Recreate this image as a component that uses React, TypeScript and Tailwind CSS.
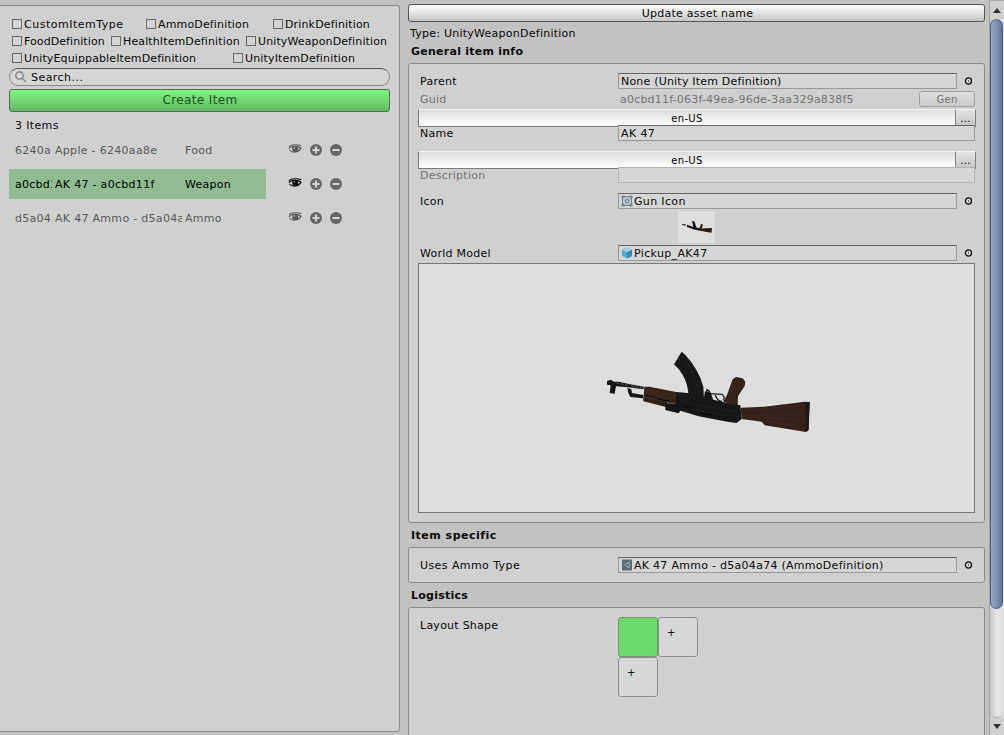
import type { ReactNode } from 'react';

function Check({ label, className }: { label: string; className: string }) {
  return (
    <label className={`flex h-[17px] shrink-0 items-center whitespace-nowrap ${className}`}>
      <span className="mr-[2px] h-[10px] w-[10px] shrink-0 border border-[#686868] bg-[#d4d4d4]" />
      <span className="pt-[2px]">{label}</span>
    </label>
  );
}

function Eye() {
  return (
    <svg viewBox="0 0 14 10" className="h-[10px] w-[14px]">
      <path d="M.8 2.600C4 .4 9.500 .2 13.200 1.800" fill="none" stroke="currentColor" strokeWidth="1.100" />
      <path d="M.8 4.600C3.200 1.800 9.800 1.400 13 4.200C10.800 8.600 4.200 9.400 1.500 6" fill="none" stroke="currentColor" strokeWidth="1.200" />
      <circle cx="7.200" cy="4.900" r="3" fill="currentColor" />
      <circle cx="6.400" cy="3.900" r=".7" fill="#ddd" />
    </svg>
  );
}

function RoundIcon({ plus }: { plus?: boolean }) {
  return (
    <svg viewBox="0 0 12 12" className="h-3 w-3">
      <circle cx="6" cy="6" r="6" fill="#686868" />
      <path d={plus ? 'M2.500 6H9.500M6 2.500V9.500' : 'M2.500 6H9.500'} stroke="#d6d6d6" strokeWidth="2" />
    </svg>
  );
}

function ItemRow({ id, name, type, selected }: { id: string; name: string; type: string; selected?: boolean }) {
  return (
    <div className={`flex h-[30px] items-center ${selected ? 'text-black' : 'text-[#585858]'}`}>
      <div className={`flex h-[30px] w-[257px] items-center pl-[6px] pt-[2px] ${selected ? 'bg-[#92bb93]' : ''}`}>
        <span className="w-[37px] overflow-hidden whitespace-nowrap">{id}</span>
        <span className="ml-[3px] w-[127px] overflow-hidden whitespace-nowrap tracking-[0.3px]">{name}</span>
        <span className="ml-[3px]">{type}</span>
      </div>
      <span className="mb-[3px] ml-[22px]"><Eye /></span>
      <span className="ml-[8px]"><RoundIcon plus /></span>
      <span className="ml-[8px]"><RoundIcon /></span>
    </div>
  );
}

function Rifle() {
  return (
    <svg viewBox="0 0 720 330" className="h-[110px] w-[240px]">
      <path d="M51 138L62 134L72 140L86 140L120 148L162 155L160 163L115 157L78 154L74 176L59 174L62 151L51 149Z" fill="#151617" />
      <path d="M80 144L115 151M124 153L155 158" stroke="#aaa" strokeWidth="1.500" strokeDasharray="8 5" />
      <path d="M112 158L124 163L126 174L160 180L159 190L121 186L115 174Z" fill="#151617" />
      <path d="M163 155L178 155L262 172L260 207L228 202L161 182Z" fill="#35241a" />
      <path d="M160 184L232 201L228 216L160 199Z" fill="#302015" />
      <path d="M162 181L240 200" stroke="#171310" strokeWidth="5" />
      <path d="M170 164L254 180M168 173L252 192" stroke="#3f2b1e" strokeWidth="2" />
      <path d="M275 50L286 60Q326 103 340 155L342 192L296 186Q294 126 252 88Z" fill="#161819" />
      <path d="M273 60Q313 105 327 178" stroke="#202223" strokeWidth="3" fill="none" />
      <path d="M258 171L293 174L342 187L345 169L361 171L370 194L402 202L451 211L455 252L440 264L412 260L326 244L271 227L266 235L226 225L226 204L258 206Z" fill="#151617" />
      <path d="M272 196L308 208L440 230M303 222L412 243" stroke="#1f2122" strokeWidth="3" fill="none" />
      <path d="M281 214L301 219M331 234L366 240" stroke="#090a0b" strokeWidth="4" />
      <path d="M350 174L351 164L360 170M358 176L396 178Q407 187 399 196M376 180Q382 199 396 199" fill="none" stroke="#1a1b1c" strokeWidth="4" />
      <path d="M400 200L411 180L428 133L438 126L458 130L466 140L464 153L444 184L443 214Z" fill="#33221a" />
      <path d="M436 137L419 190" stroke="#412a1c" strokeWidth="3" />
      <path d="M452 218L522 215L645 200L659 201L655 286L648 291L524 271L515 260L455 252Z" fill="#33211a" />
      <path d="M462 226L642 211M464 242L642 238M529 249L638 255M542 261L638 274" stroke="#3e281e" strokeWidth="3" />
      <path d="M647 201L659 201L656 285L648 290Z" fill="#1d1815" />
    </svg>
  );
}

function RifleIcon() {
  return (
    <svg viewBox="0 0 30 14" className="h-[14px] w-[30px]">
      <path d="M0 4.500L4 5.200" stroke="#222" strokeWidth="1.200" />
      <path d="M5 4.800L10 6.500L19 8.500L19 11L12 9.500L5 7Z" fill="#1b1511" />
      <path d="M10 1L12.500 1.500L14.500 8L11.500 7.500Z" fill="#111" />
      <path d="M19 4L21 4.500L19.500 9L17.500 8.500Z" fill="#1f1610" />
      <path d="M18.500 8.500L30 8L29.500 12.800L22 11.500L18.500 10.800Z" fill="#2c1a11" />
    </svg>
  );
}

function Cube() {
  return (
    <svg viewBox="0 0 12 12" className="h-3 w-3 shrink-0">
      <path d="M6 .5L11 2.800V9L6 11.500L1 9V2.800Z" fill="#58a9d3" />
      <path d="M6 .5L11 2.800L6 5.200L1 2.800Z" fill="#9bd3e9" />
      <path d="M6 5.200L11 2.800V9L6 11.500Z" fill="#3e88b3" />
    </svg>
  );
}

function SpriteIcon() {
  return (
    <svg viewBox="0 0 12 12" className="h-3 w-3 shrink-0">
      <rect x="1.500" y="1.500" width="9" height="9" fill="#c3cace" stroke="#7b8287" />
      <path d="M.5 .5h3v3h-3zM8.500 .5h3v3h-3zM.5 8.500h3v3h-3zM8.500 8.500h3v3h-3z" fill="#6d8da3" />
      <circle cx="6" cy="6" r="1.800" fill="#b5c8d3" stroke="#587b92" />
    </svg>
  );
}

function AssetIcon() {
  return (
    <svg viewBox="0 0 12 12" className="h-3 w-3 shrink-0">
      <rect x="1" y=".5" width="10" height="11" rx=".5" fill="#5d6c75" />
      <path d="M3 6L8.500 3V9Z" fill="#7d8e97" stroke="#a5b5bc" />
      <path d="M3 6H7M7 6L9 3.500M7 6L9 8.500" stroke="#52616a" strokeWidth=".8" />
    </svg>
  );
}

function Picker() {
  return (
    <svg viewBox="0 0 8 8" className="mb-px ml-[7px] h-2 w-2">
      <circle cx="4.500" cy="4" r="3.100" fill="none" stroke="#111" strokeWidth="1.300" />
      <rect x="4" y="3.500" width="1" height="1" fill="#111" />
    </svg>
  );
}

function Row({ label, children, className = '' }: { label: string; children?: ReactNode; className?: string }) {
  return (
    <div className={`flex h-4 items-center ${className}`}>
      <span className="w-[200px] shrink-0 pl-[2px] pt-[2px]">{label}</span>
      {children}
    </div>
  );
}

function Field({ text, icon, wide, faded, className = '' }: { text?: string; icon?: ReactNode; wide?: boolean; faded?: boolean; className?: string }) {
  const width = wide ? 'w-[357px]' : 'w-[339px]';
  const edge = faded ? 'border-[#b4b4b4]' : 'border-[#999] border-t-[#666]';
  return (
    <span className={`flex h-4 shrink-0 items-center whitespace-nowrap border bg-[#d6d6d6] pl-[2px] ${width} ${edge} ${className}`}>
      {icon}
      <span className={icon ? 'pl-px pt-[2px]' : 'pt-[2px]'}>{text}</span>
    </span>
  );
}

function Language() {
  return (
    <div className="flex h-[18px] w-[558px] border-b border-[#7c7c7c] text-[10px] tracking-[0.3px] text-black">
      <div className="flex w-[537px] items-center justify-center border-l border-t border-l-[#777] border-t-[#f5f5f5] bg-linear-to-b from-[#dedede] to-white pt-[2px]">en-US</div>
      <div className="flex w-[21px] items-center justify-center border-x border-t border-x-[#828282] border-t-[#f5f5f5] bg-linear-to-b from-[#e3e3e3] to-[#c5c5c5] pt-[2px]">...</div>
    </div>
  );
}

function Heading({ children, className }: { children: ReactNode; className: string }) {
  return <h2 className={`h-4 pl-[3px] pt-px font-bold leading-4 ${className}`}>{children}</h2>;
}

export default function App() {
  return (
    <main className="flex h-[735px] w-[1004px] overflow-hidden bg-[#c2c2c2] font-['DejaVu_Sans',sans-serif] text-[11px] leading-[14px] tracking-[0.25px] text-[#0a0a0a]">
      <aside className="mt-[5px] flex h-[727px] w-[400px] shrink-0 flex-col rounded-r-[3px] border border-l-0 border-[#8b8b8b] bg-[#d0d0d0] pl-[9px] pt-[9px]">
        <div className="flex pl-[3px]">
          <Check label="CustomItemType" className="w-[134px] tracking-[0.5px]" />
          <Check label="AmmoDefinition" className="w-[127px] tracking-[0.15px]" />
          <Check label="DrinkDefinition" className="tracking-[0.15px]" />
        </div>
        <div className="flex pl-[3px]">
          <Check label="FoodDefinition" className="w-[99px] tracking-[0.08px]" />
          <Check label="HealthItemDefinition" className="w-[135px] tracking-[0.12px]" />
          <Check label="UnityWeaponDefinition" className="tracking-[0.12px]" />
        </div>
        <div className="flex pl-[3px]">
          <Check label="UnityEquippableItemDefinition" className="w-[221px] tracking-[0.12px]" />
          <Check label="UnityItemDefinition" className="tracking-[0.15px]" />
        </div>
        <div className="mt-[2px] flex h-[18px] w-[381px] items-center rounded-full border border-[#8b8b8b] border-t-[#555] bg-[#d5d5d5] pl-[5px] tracking-[0.45px]">
          <svg viewBox="0 0 12 12" className="mr-[4px] h-3 w-3" fill="none" stroke="#777" strokeWidth="1.200">
            <circle cx="4.500" cy="4.500" r="3.700" />
            <path d="M7.300 7.300L11 11" />
          </svg>
          <span className="pt-[2px]">Search...</span>
        </div>
        <button className="mt-[3px] h-[23px] w-[381px] shrink-0 rounded-[3px] border border-[#4c754c] bg-linear-to-b from-[#80f680] to-[#62b962] pb-px pl-px text-[12px] tracking-[0.38px] text-[#205020]">Create Item</button>
        <div className="mt-[7px] pl-[6px] tracking-[0.35px]">3 Items</div>
        <div className="mt-[2px] flex flex-col gap-1">
          <ItemRow id="6240a" name="Apple - 6240aa8e" type="Food" />
          <ItemRow id="a0cbd11f" name="AK 47 - a0cbd11f" type="Weapon" selected />
          <ItemRow id="d5a04" name="AK 47 Ammo - d5a04a74" type="Ammo" />
        </div>
      </aside>

      <section className="ml-2 mt-1 w-[577px] shrink-0">
        <button className="block h-[18px] w-[577px] rounded-[3px] border border-[#555] bg-linear-to-b from-white to-[#c5c5c5] pl-[2px] pt-px leading-[14px]">Update asset name</button>
        <p className="mt-[5px] pl-[2px]">Type: UnityWeaponDefinition</p>
        <Heading className="mt-[2px]">General item info</Heading>
        <div className="mt-1 h-[460px] rounded-[3px] border border-[#8b8b8b] bg-[#d0d0d0] pl-[9px] pt-[9px]">
          <Row label="Parent"><Field text="None (Unity Item Definition)" className="tracking-[0.2px]" /><Picker /></Row>
          <Row label="Guid" className="mt-[2px] text-[#747474]">
            <span className="w-[301px] pl-[2px] pt-[2px] tracking-[0.2px]">a0cbd11f-063f-49ea-96de-3aa329a838f5</span>
            <button className="h-4 w-14 rounded-[3px] border border-[#a0a0a0] bg-linear-to-b from-[#dedede] to-[#cacaca] pt-px text-[10px] leading-none">Gen</button>
          </Row>
          <div className="mt-[2px]"><Language /></div>
          <Row label="Name" className="-mt-[2px]"><Field text="AK 47" wide className="tracking-[0.4px]" /></Row>
          <div className="mt-[10px]"><Language /></div>
          <Row label="Description" className="-mt-[2px] text-[#747474]"><Field wide faded /></Row>
          <Row label="Icon" className="mt-[10px]"><Field icon={<SpriteIcon />} text="Gun Icon" className="tracking-[0.35px]" /><Picker /></Row>
          <div className="ml-[260px] mt-[2px] flex h-8 w-[37px] items-center justify-center bg-[#dedede]">
            <RifleIcon />
          </div>
          <Row label="World Model" className="mt-[2px]"><Field icon={<Cube />} text="Pickup_AK47" className="tracking-[0.35px]" /><Picker /></Row>
          <div className="mt-[2px] h-[250px] w-[557px] border border-[#777] bg-[#dedede] pl-[171px] pt-[71px]">
            <Rifle />
          </div>
        </div>
        <Heading className="mt-1 tracking-[0.5px]">Item specific</Heading>
        <div className="mt-1 h-9 rounded-[3px] border border-[#8b8b8b] bg-[#d0d0d0] pl-[9px] pt-[9px]">
          <Row label="Uses Ammo Type" className="tracking-[0.42px]"><Field icon={<AssetIcon />} text="AK 47 Ammo - d5a04a74 (AmmoDefinition)" className="tracking-[0.28px]" /><Picker /></Row>
        </div>
        <Heading className="mt-1">Logistics</Heading>
        <div className="mt-1 flex h-[140px] rounded-t-[3px] border border-[#8b8b8b] bg-[#d0d0d0] pl-[9px] pt-[9px]">
          <span className="w-[200px] pl-[2px] pt-[2px]">Layout Shape</span>
          <div className="grid h-20 w-20 grid-cols-2">
            <div className="h-10 w-10 rounded-[3px] border border-[#709570] bg-[#6ad969]" />
            <div className="h-10 w-10 rounded-[3px] border border-[#8e8e8e] bg-[#d7d7d7] pl-[8px] pt-[8px] text-[10px]">+</div>
            <div className="h-10 w-10 rounded-[3px] border border-[#8e8e8e] bg-[#d7d7d7] pl-[8px] pt-[8px] text-[10px]">+</div>
          </div>
        </div>
      </section>

      <div className="ml-[4px] flex h-[735px] w-[15px] shrink-0 flex-col border-l border-[#a4a4a4] bg-linear-to-r from-[#c8c8c8] via-[#e8e8e8] to-[#dedede]">
        <div className="flex h-[19px] shrink-0 items-center justify-center border-t border-[#aaa] bg-[#d0d0d0]">
          <svg viewBox="0 0 8 5" className="h-[5px] w-2"><path d="M0 5L4 0L8 5Z" fill="#333" /></svg>
        </div>
        <div className="h-[590px] w-[13px] shrink-0 rounded-full border border-[#465d85] bg-linear-to-r from-[#96a6bf] via-[#7f91b0] to-[#617398]" />
        <div className="h-[109px] shrink-0 rounded-b-full border-b border-[#aaa]" />
        <div className="flex grow items-center justify-center bg-[#d0d0d0]">
          <svg viewBox="0 0 8 5" className="h-[5px] w-2"><path d="M0 0H8L4 5Z" fill="#333" /></svg>
        </div>
      </div>
    </main>
  );
}
